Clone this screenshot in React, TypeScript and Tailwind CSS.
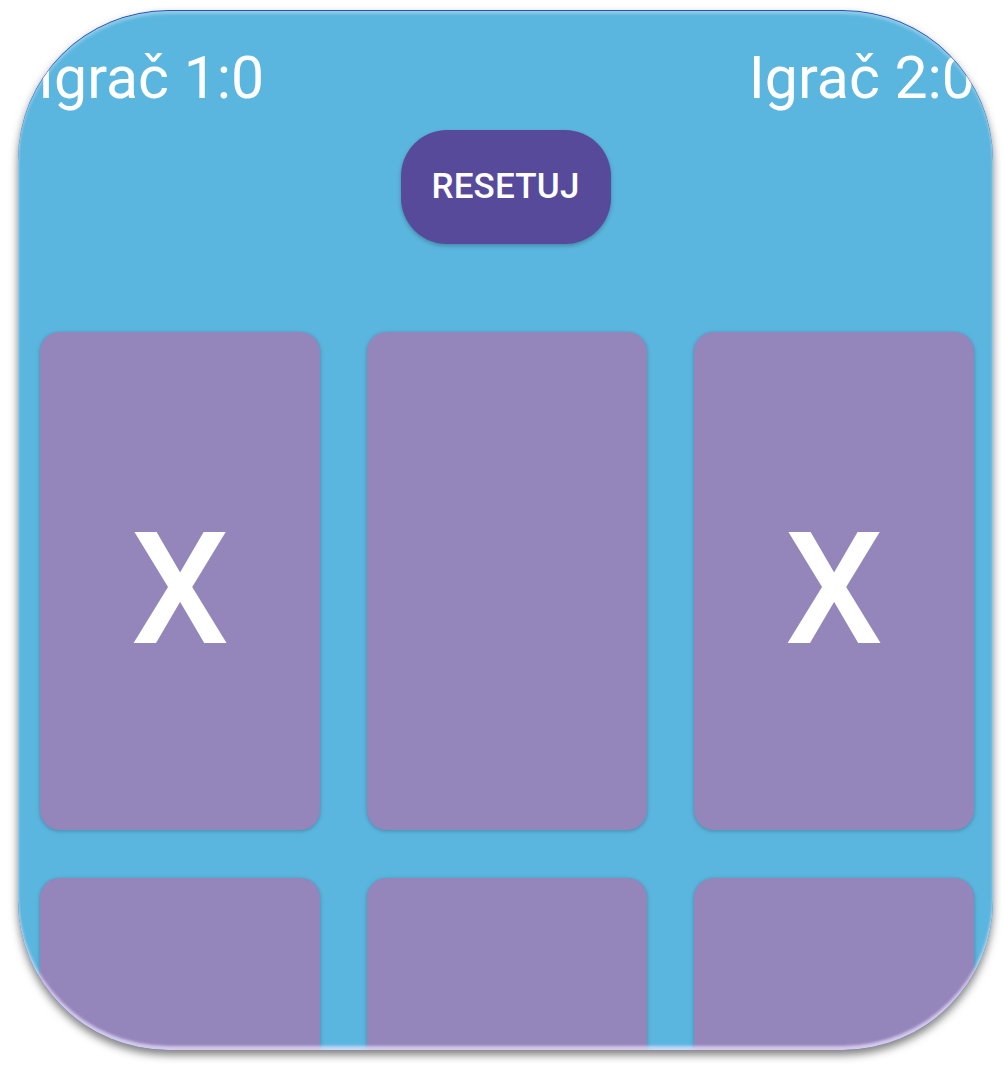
const cells = ['X', '', 'X', '', '', ''];

export default function App() {
  return (
    <div className="w-[1005px] h-[1071px] bg-white pt-[10px] pl-[18px]" style={{ fontFamily: 'Roboto, "Noto Sans", sans-serif' }}>
      <div className="relative w-[975px] h-[1040px] rounded-[150px] overflow-hidden bg-[#5bb6df] shadow-[0_5px_9px_rgba(0,0,0,0.5)]">
        <div className="flex justify-between h-[98px] pl-[20px] pr-[18px] pt-[38px] text-[59px] leading-none text-white whitespace-nowrap">
          <span>Igrač 1:0</span>
          <span>Igrač 2:0</span>
        </div>

        <div className="flex justify-center mt-[22px]">
          <button className="w-[210px] h-[114px] rounded-[46px] bg-[#574a9b] text-white text-[35px] font-medium tracking-[0.2px] shadow-[0_2px_4px_rgba(0,0,0,0.25)]">
            RESETUJ
          </button>
        </div>

        <div className="grid grid-cols-[280px_280px_280px] gap-x-[47px] gap-y-[48px] pl-[22px] mt-[88px]">
          {cells.map((c, i) => (
            <div
              key={i}
              className="h-[498px] rounded-[20px] bg-[#9485bb] shadow-[0_1px_4px_rgba(0,0,0,0.25)] flex items-center justify-center pt-[18px] text-white text-[156px] font-medium leading-none"
            >
              {c}
            </div>
          ))}
        </div>

        <div className="absolute inset-0 rounded-[150px] pointer-events-none shadow-[inset_0_1px_0_rgba(45,60,170,0.9),inset_0_4px_3px_rgba(255,255,255,0.3),inset_0_-4px_3px_rgba(235,225,255,0.75)]" />
      </div>
    </div>
  );
}
